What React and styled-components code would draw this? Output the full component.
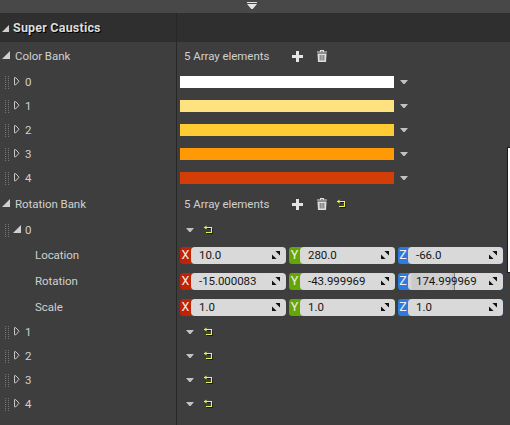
import React from "react";
import styled, { createGlobalStyle } from "styled-components";

const GlobalStyle = createGlobalStyle`
  * { box-sizing: border-box; }
  body { margin: 0; background: #3e3e3e; overflow: hidden; }
`;

const Panel = styled.main`
  position: relative;
  width: 510px;
  height: 425px;
  overflow: hidden;
  display: flex;
  flex-direction: column;
  background: #3e3e3e;
  color: #d0d0d0;
  font: 400 11.5px/16px Roboto, "Noto Sans", sans-serif;
  letter-spacing: -0.05px;
  white-space: nowrap;
`;

const TopStrip = styled.div`
  height: 13px;
  flex: none;
  background: #484848;
  display: flex;
  padding: 2px 0 0 247px;
`;

const Row = styled.div`
  display: grid;
  grid-template-columns: 177px 1fr;
  flex: none;
  height: ${(p) => p.$h}px;
  background: ${(p) => (p.$header ? "#2f2f2f" : "transparent")};
`;

const NameCell = styled.div`
  display: flex;
  align-items: center;
  border-right: 1px solid #272727;
  padding-left: ${(p) => p.$indent || 0}px;
`;

const ValueCell = styled.div`
  display: flex;
  align-items: center;
  padding-left: ${(p) => p.$pad ?? 3}px;
`;

const Title = styled.h1`
  margin: 0 0 0 4px;
  font-size: 12.5px;
  line-height: 16px;
  font-weight: 700;
  letter-spacing: 0.2px;
  color: #dcdcdc;
  text-shadow: 1px 1px 0 #000;
`;

const Label = styled.span`
  margin-left: ${(p) => p.$gap || 0}px;
`;

const Count = styled.span`
  width: 108px;
`;

const Icon = styled.svg`
  display: block;
  flex: none;
  margin-left: ${(p) => p.$gap || 0}px;
  margin-top: ${(p) => p.$drop || 0}px;
`;

const Swatch = styled.div`
  width: 214px;
  height: 12px;
  margin-right: 6px;
  background: ${(p) => p.$color};
`;

const Fields = styled.div`
  display: grid;
  grid-template-columns: 106px 106px 105px;
  column-gap: 3px;
  margin-top: 1px;
`;

const Field = styled.div`
  display: flex;
  height: 17px;
  border-radius: 3px;
  background: ${(p) => p.$color};
`;

const Axis = styled.span`
  width: ${(p) => p.$w}px;
  text-align: center;
  font-size: 12.5px;
  line-height: 16px;
  letter-spacing: 0;
  color: #f4eeee;
`;

const Input = styled.div`
  flex: 1;
  display: flex;
  align-items: flex-start;
  justify-content: space-between;
  line-height: 16px;
  padding: 0 6px 0 8px;
  border-radius: 4px;
  color: #151515;
  background: ${(p) =>
    p.$filled
      ? "linear-gradient(90deg, #d8d8d8 0 2px, #cacaca 5px, #d4d4d4 40px, #c0c0c0 46px, #858585 46px 47px, #d9d9d9 47px)"
      : "#d9d9d9"};
`;

const ScrollThumb = styled.div`
  position: absolute;
  top: 147px;
  right: 0;
  width: 3px;
  height: 126px;
  background: #fff;
  border: solid #1c1c1c;
  border-width: 1px 0 1px 1px;
`;

const Expanded = ({ gap, drop, size = 8 }) => (
  <Icon $gap={gap} $drop={drop} width={size} height={size} viewBox="0 0 8 8">
    <path d="M8 0V8H0Z" fill="#cfcfcf" />
  </Icon>
);

const Collapsed = () => (
  <Icon $gap={4} $drop={-2} width="6" height="9" viewBox="0 0 6 9">
    <path d="M.5.7H1.8L5 4.2L1.8 7.8H.5Z" fill="none" stroke="#c8c8c8" />
  </Icon>
);

const Grip = () => (
  <Icon width="5" height="13" viewBox="0 0 5 13">
    {[0, 2, 4, 6, 8, 10, 12].map((y) => (
      <path key={y} d={`M0 ${y}h1v1h-1zM3 ${y}h1v1h-1z`} fill="#767676" />
    ))}
  </Icon>
);

const Caret = () => (
  <Icon width="8" height="4" viewBox="0 0 8 4">
    <path d="M0 0H8L4.6 4H3.4Z" fill="#c2c2c2" />
  </Icon>
);

const Reset = ({ gap }) => (
  <Icon $gap={gap} width="9" height="10" viewBox="0 0 9 10">
    <path d="M3 3.5H8.5V8.5H3" fill="none" stroke="#161616" />
    <path d="M0 2.5H7.5V7.5H2" fill="none" stroke="#eef355" strokeWidth="1.15" />
    <path d="M0 2.5L2.5 .5V4.5Z" fill="#eef355" />
  </Icon>
);

const Plus = () => (
  <Icon width="11" height="11" viewBox="0 0 11 11">
    <path d="M4 0H7V4H11V7H7V11H4V7H0V4H4Z" fill="#e4e4e4" />
  </Icon>
);

const Trash = () => (
  <Icon $gap={14} width="10" height="12" viewBox="0 0 10 12">
    <path d="M3.5 1.5V.5H6.5V1.5M0 2H10" fill="none" stroke="#dedede" strokeWidth="1.1" />
    <path d="M.5 3.5H9.5L9 12H1Z" fill="#dedede" />
    <path d="M3.2 5V10.5M5 5V10.5M6.8 5V10.5" stroke="#4a4a4a" strokeWidth=".8" />
  </Icon>
);

const Resize = () => (
  <Icon $drop={4} width="8" height="8" viewBox="0 0 8 8">
    <path d="M3.4 0H8V4.6ZM0 3.4V8H4.6Z" fill="#111" />
  </Icon>
);

const ArrayHeader = ({ name, reset }) => (
  <Row $h={28}>
    <NameCell $indent={2}>
      <Expanded drop={-3} />
      <Label $gap={5}>{name}</Label>
    </NameCell>
    <ValueCell $pad={7}>
      <Count>5 Array elements</Count>
      <Plus />
      <Trash />
      {reset && <Reset gap={10} />}
    </ValueCell>
  </Row>
);

const ItemName = ({ index, open }) => (
  <NameCell $indent={5}>
    <Grip />
    {open ? <Expanded gap={3} drop={-2} /> : <Collapsed />}
    <Label $gap={open ? 4 : 5}>{index}</Label>
  </NameCell>
);

const StructRow = ({ index, open }) => (
  <Row $h={24}>
    <ItemName index={index} open={open} />
    <ValueCell $pad={9}>
      <Caret />
      <Reset gap={10} />
    </ValueCell>
  </Row>
);

const axes = [
  { name: "X", color: "#be2405", w: 11 },
  { name: "Y", color: "#65a607", w: 11 },
  { name: "Z", color: "#2b7be0", w: 10 },
];

const swatches = ["#ffffff", "#ffe280", "#ffcb35", "#ff9905", "#d23d08"];

const vectors = [
  { name: "Location", values: ["10.0", "280.0", "-66.0"] },
  { name: "Rotation", values: ["-15.000083", "-43.999969", "174.999969"], filled: 2 },
  { name: "Scale", values: ["1.0", "1.0", "1.0"] },
];

export default function App() {
  return (
    <Panel>
      <GlobalStyle />
      <TopStrip>
        <Icon width="10" height="8" viewBox="0 0 10 8">
          <path d="M0 0H10V1H0ZM0 2H10L5.7 7H4.3Z" fill="#e4e4e4" />
        </Icon>
      </TopStrip>
      <Row $h={29} $header>
        <NameCell $indent={2}>
          <Expanded size={7} drop={2} />
          <Title>Super Caustics</Title>
        </NameCell>
      </Row>
      <ArrayHeader name="Color Bank" />
      {swatches.map((color, i) => (
        <Row $h={24} key={color}>
          <ItemName index={i} />
          <ValueCell>
            <Swatch $color={color} />
            <Caret />
          </ValueCell>
        </Row>
      ))}
      <ArrayHeader name="Rotation Bank" reset />
      <StructRow index={0} open />
      {vectors.map((v) => (
        <Row $h={26} key={v.name}>
          <NameCell $indent={35}>{v.name}</NameCell>
          <ValueCell>
            <Fields>
              {axes.map((a, i) => (
                <Field key={a.name} $color={a.color}>
                  <Axis $w={a.w}>{a.name}</Axis>
                  <Input $filled={v.filled === i}>
                    {v.values[i]}
                    <Resize />
                  </Input>
                </Field>
              ))}
            </Fields>
          </ValueCell>
        </Row>
      ))}
      {[1, 2, 3, 4].map((i) => (
        <StructRow index={i} key={i} />
      ))}
      <Row $h={9}>
        <NameCell />
      </Row>
      <ScrollThumb />
    </Panel>
  );
}
